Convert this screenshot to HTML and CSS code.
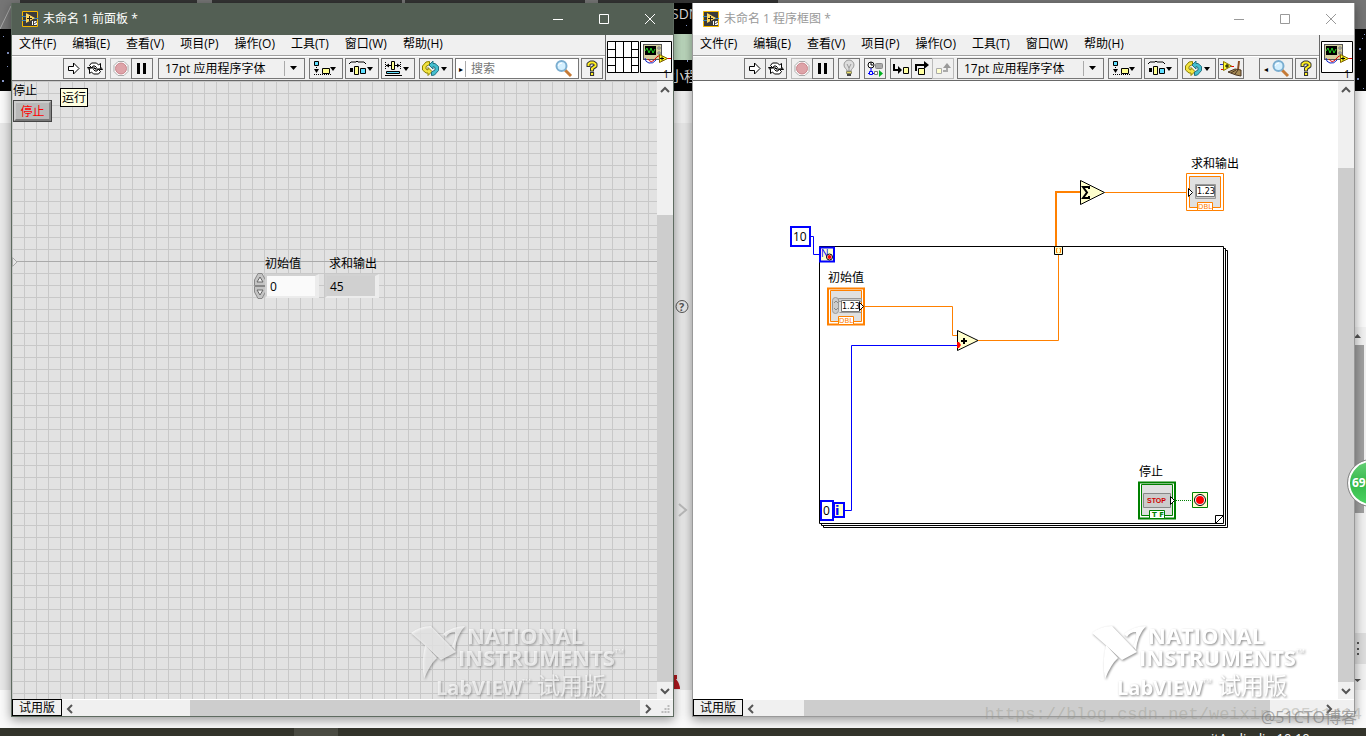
FILE: index.html
```html
<!DOCTYPE html>
<html lang="zh-CN">
<head>
<meta charset="utf-8">
<title>未命名 1 - LabVIEW</title>
<link rel="stylesheet" href="styles.css">
</head>
<body>
<svg class="defs" aria-hidden="true">
  <symbol id="app" viewBox="0 0 16 16"><path fill="#3b3b3b" stroke="#f5b800" d="M.5.5h15v15H.5z"/><path stroke="#3f86b8" d="M0 5.500h5M0 9.500h5M11 7.500h5"/><path fill="#ffd75e" d="M4 2l9 5-9 5z"/><path stroke="#222" d="M5 7.500h5M7.500 5v5"/><path stroke="#fff" fill="none" d="M10.500 10v4M14.500 10.500h-2v1.500h2v1.500h-2.500"/></symbol>
  <symbol id="run" viewBox="0 0 20 19"><path d="M4.500 7.500h5v-3.500l5.500 5.500-5.500 5.500v-3.500h-5z" fill="#fff" stroke="#000"/></symbol>
  <symbol id="loop" viewBox="0 0 20 19"><g fill="#fff" stroke="#000"><path d="M4.500 6.500l2-2.500h5l2 2 2-1.500v5.500h-5.500l1.500-1.500-1.500-1.500H8L7 9z"/><path d="M15.500 12.500l-2 2.500h-5l-2-2-2 1.500V9h5.500l-1.500 1.500 1.500 1.500h2l1-2z"/><path d="M2.500 8.500h3l-1.500 2zM14.500 10.500h3l-1.500-2z"/></g></symbol>
  <symbol id="abort" viewBox="0 0 20 19"><path d="M7 2.500h6l4 4v6l-4 4H7l-4-4v-6z" fill="#fff" stroke="#aaa"/><circle cx="10" cy="9.500" r="5.500" fill="#dea3a8" stroke="#c9868d"/></symbol>
  <symbol id="pause" viewBox="0 0 20 19"><path d="M5 4h3v11H5zM11 4h3v11h-3z"/></symbol>
  <symbol id="bulb" viewBox="0 0 20 19"><path d="M8 12c0-2-3-3-3-6a5 5 0 0 1 10 0c0 3-3 4-3 6z" fill="#ddd" stroke="#999"/><path d="M8 5l2 4 2-4M10 9v3" fill="none" stroke="#999"/><path fill="#eadb68" stroke="#886" d="M7.500 12.500h5v2h-5z"/><path d="M8 16h4" stroke="#444" stroke-width="2"/></symbol>
  <symbol id="retain" viewBox="0 0 20 19"><circle cx="6" cy="6" r="3" fill="#fff" stroke="#000"/><path d="M6 3v3h2" fill="none" stroke="#000"/><path d="M6 9v4M3 14.500h10" stroke="#00f" fill="none"/><path fill="#eee" stroke="#00f" d="M4.500 12.500h3v3h-3z"/><rect x="10.500" y="4.500" width="7" height="5" rx="1" fill="#aaa" stroke="#888"/><path d="M9.500 12.500h3v3h-3z" fill="#fff" stroke="#777"/><path fill="#00b020" d="M14 11l4 3.500-4 3.500z"/></symbol>
  <symbol id="into" viewBox="0 0 20 19"><path d="M3 5v6h6" fill="none" stroke="#000" stroke-width="2"/><path d="M7 7l4 4-4 4z"/><path fill="#ffffa0" stroke="#000" d="M12.500 8.500h5v6h-5z"/></symbol>
  <symbol id="over" viewBox="0 0 20 19"><path d="M4 12V6h9" fill="none" stroke="#000" stroke-width="2"/><path d="M12 2l5 4-5 4z"/><path fill="#ffffa0" stroke="#000" d="M6.500 9.500h6v6h-6z"/></symbol>
  <symbol id="out" viewBox="0 0 20 19"><path d="M10 12h4V8" fill="none" stroke="#aaa" stroke-width="2"/><path fill="#999" d="M10 9l4-5 4 5z"/><path fill="#ffffd0" stroke="#aaa" d="M3.500 9.500h5v5h-5z"/></symbol>
  <symbol id="align" viewBox="0 0 32 19"><path fill="#60dfff" stroke="#000" d="M4.500 2.500h4v4h-4z"/><path stroke="#000" stroke-dasharray="1 1" d="M6.500 8v4M4 15.500h17"/><path d="M4 10h5l-2.500 4zM20 8h6l-3 4z"/><path fill="#ffff90" stroke="#000" d="M12.500 9.500h7v5h-7z"/></symbol>
  <symbol id="dist" viewBox="0 0 32 19"><path fill="none" stroke="#000" d="M3 5l2-2h5l1-1 1 1h6l2 2"/><path fill="#ffff90" stroke="#000" d="M8.500 7.500h4v8h-4z"/><path fill="#60dfff" stroke="#000" d="M14.500 9.500h5v5h-5z"/><path d="M4 9h3v4H4zM21 8h6l-3 4z"/></symbol>
  <symbol id="resize" viewBox="0 0 32 19"><path stroke="#000" stroke-dasharray="1 1" d="M3.500 3v8M18.500 3v8"/><path d="M4 6.500h14" stroke="#000"/><path fill="#ffff90" stroke="#000" d="M9.500 2.500h3v8h-3z"/><path d="M4 6.500l3-2v4zM18 6.500l-3-2v4zM21 8h6l-3 4z"/><path fill="#60dfff" stroke="#000" d="M4.500 12.500h13v2h-13z"/><path stroke="#000" d="M3 16.500h17"/></symbol>
  <symbol id="order" viewBox="0 0 32 19"><path fill="#f3e440" stroke="#8a8000" d="M9.500 2.500L6 3 2.500 7v4L6 14h2v2.500l4-4-4-4v2.500l-2-1V7.500l3.500-2z"/><path fill="#45bfcf" stroke="#237080" d="M11.500 16.500l3-.500 4-4.500V7.500L15 4.500h-2V2L9 6l4 4V7.500l2 1V11l-3.500 2z"/><path d="M21 8h6l-3 4z"/></symbol>
  <symbol id="broom" viewBox="0 0 24 19"><path stroke="#23c" d="M1 5.500h4"/><path stroke="#e00" d="M11 7.500h4M2 10.500h4"/><path fill="#ffff35" stroke="#887000" d="M4.500 2.500l8 4.500-8 4.500z"/><path stroke="#000" d="M6 7h4M8 5v4"/><path stroke="#8b4b20" stroke-width="2" d="M20 2l-1 9"/><path fill="#a58a55" stroke="#4a3520" d="M9 13l7-3 6 1v6l-5-1z"/><path stroke="#4a3520" d="M12 14l5-3M16 15l3-4"/></symbol>
  <symbol id="lens" viewBox="0 0 20 19"><path stroke="#c57a36" stroke-width="3" d="M11 11l6 6"/><circle cx="7.500" cy="7" r="5" fill="#d4f0ff" stroke="#7baed0" stroke-width="2"/><path d="M4 7q1-3 4-3" fill="none" stroke="#fff"/></symbol>
  <symbol id="help" viewBox="0 0 20 19"><g fill="none" stroke-linecap="square" stroke-linejoin="round"><path stroke="#333" stroke-width="4" d="M6.500 6V5L8.500 3.500h3L13.500 5v2L10 9.500v1M10 15h.1"/><path stroke="#ffee20" stroke-width="2" d="M6.500 6V5L8.500 3.500h3L13.500 5v2L10 9.500v1M10 15h.1"/></g></symbol>
  <symbol id="conn" viewBox="0 0 32 32"><path fill="#fff" stroke="#000" d="M.5.5h31v31H.5zM8.500 0v32M16.500 0v32M24.500 0v32M0 16.500h32M0 8.500h8M0 24.500h8M24 8.500h8M24 24.500h8"/></symbol>
  <symbol id="vi" viewBox="0 0 32 32"><path fill="#fff" stroke="#000" d="M.5.5h31v31H.5z"/><rect x="3.500" y="3.500" width="18" height="15" fill="#d5cfa0" stroke="#555"/><path d="M5 5h11v9H5z"/><path stroke="#20d020" fill="none" d="M5 10l2-3 2 5 2-5 2 5 2-4"/><path fill="#fff" stroke="#777" d="M18 6h2v2h-2zM18 11h2v2h-2z"/><path fill="none" stroke="#1020c0" d="M5 17q0 4 4 5t7-3"/><path fill="none" stroke="#e00000" d="M8 18q3 5 7 0t5-2M25 17.500h6"/><path fill="#ffff20" stroke="#806000" d="M19.500 13.500l8 4-8 4z"/><path stroke="#000" d="M20 17.500h4M22 15.500v4"/></symbol>
  <symbol id="up" viewBox="0 0 16 16"><path fill="none" stroke="#555" stroke-width="2" d="M4 10l4-4 4 4"/></symbol>
  <symbol id="down" viewBox="0 0 16 16"><path fill="none" stroke="#555" stroke-width="2" d="M4 6l4 4 4-4"/></symbol>
  <symbol id="left" viewBox="0 0 16 16"><path fill="none" stroke="#555" stroke-width="2" d="M10 4L6 8l4 4"/></symbol>
  <symbol id="right" viewBox="0 0 16 16"><path fill="none" stroke="#555" stroke-width="2" d="M6 4l4 4-4 4"/></symbol>
  <symbol id="drop" viewBox="0 0 8 5"><path d="M0 0h7L3.500 4z"/></symbol>
  <symbol id="min" viewBox="0 0 10 10"><path stroke="currentColor" d="M0 5.500h10"/></symbol>
  <symbol id="max" viewBox="0 0 10 10"><path fill="none" stroke="currentColor" d="M.5.5h9v9h-9z"/></symbol>
  <symbol id="close" viewBox="0 0 10 10"><path stroke="currentColor" d="M0 0l10 10M10 0L0 10"/></symbol>
  <symbol id="eagle" viewBox="0 0 56 56"><path d="M0 7Q9 0 20 0l25 26-15 8Q15 20 0 7z"/><path d="M14 19l12 13Q19 38 13 53 10 36 14 19z"/><path d="M32 8Q42 0 54 0 45 10 44 24L41 20Q45 12 44 6 38 6 35 11z"/></symbol>
</svg>

<div class="desktop">
  <svg class="backdrop" viewBox="0 0 1366 736" preserveAspectRatio="none" aria-hidden="true">
    <path fill="#f2f2f2" d="M0 0h1366v736H0z"/>
    <path fill="#e8e8e8" d="M0 123h1366v567H0z"/>
    <path fill="#fafafa" d="M0 690h1366v38H0zM1355 91h11v243h-11zM0 91h11v32H0z"/>
    <path fill="#757575" d="M0 0h1366v29H0z"/>
    <path fill="#333" d="M20 0h177v3H20zM212 0h190v3H212zM405 0h180v3H405zM598 0h180v3H598z"/>
    <path d="M0 29h11v62H0zM674 3h18v88h-18zM1355 29h11v62h-11z"/>
    <path fill="#bbd6bc" d="M674 34h18v26h-18z"/>
    <path stroke="#aaa" d="M0 29l11-23"/>
    <path fill="#8899cc" d="M3 36h1v1H3zM7 52h2v2H7zM2 80h2v2H2zM7 66h1v1H7zM686 25h1v1h-1zM687 60h1v2h-1zM1359 48h2v2h-2zM1364 34h1v1h-1zM1360 60h1v1h-1zM1357 78h2v2h-2zM1362 38h1v1h-1zM1363 88h1v1h-1z"/>
    <text x="671" y="19" class="back-text">SDN</text>
    <text x="670" y="81" class="back-text">小程</text>
    <circle cx="682" cy="306.500" r="6" fill="none" stroke="#555"/><text x="679" y="311" class="back-help">?</text>
    <path fill="none" stroke="#bbb" stroke-width="2" d="M679 504l7 6-7 6"/>
    <path fill="#b0181e" d="M674 675h3v4h-1q4 5 4 10h-6z"/>
    <path fill="#f1f1f1" d="M1355 327h11v363h-11z"/>
    <path fill="#a0a0a0" d="M1355 345h9v168h-9z"/>
    <path fill="#ddd" d="M1355 633h11v31h-11z"/>
    <path fill="#555" d="M1357 642h2v2h-2zM1357 648h2v2h-2zM1357 653h2v2h-2zM1354 679h7l-3.500 3zM1354 338h7l-3.500-4z"/>
    <path fill="#33342b" d="M0 728h1366v8H0z"/><path fill="#4a4b42" d="M294 728h44v8h-44z"/>
    <text x="1211" y="743" class="clock">itAudiodio 10:10</text>
  </svg>

  <main class="windows">
    <section class="window active" aria-label="前面板">
      <header class="titlebar">
        <svg class="app"><use href="#app"/></svg><h1 class="title">未命名 1 前面板 *</h1>
        <button class="sys" aria-label="最小化"><svg><use href="#min"/></svg></button>
        <button class="sys" aria-label="最大化"><svg><use href="#max"/></svg></button>
        <button class="sys" aria-label="关闭"><svg><use href="#close"/></svg></button>
      </header>
      <div class="head">
        <div class="bars">
          <nav class="menu"><button>文件(F)</button><button>编辑(E)</button><button>查看(V)</button><button>项目(P)</button><button>操作(O)</button><button>工具(T)</button><button>窗口(W)</button><button>帮助(H)</button></nav>
          <div class="toolbar">
            <div class="group"><button class="tool" aria-label="运行"><svg><use href="#run"/></svg></button><button class="tool" aria-label="连续运行"><svg><use href="#loop"/></svg></button></div>
            <div class="group"><button class="tool off" aria-label="中止"><svg><use href="#abort"/></svg></button><button class="tool" aria-label="暂停"><svg><use href="#pause"/></svg></button></div>
            <div class="font"><select aria-label="字体"><option>17pt 应用程序字体</option></select><svg class="arrow"><use href="#drop"/></svg></div>
            <div class="pair"><button class="tool wide" aria-label="对齐对象"><svg><use href="#align"/></svg></button><button class="tool wide" aria-label="分布对象"><svg><use href="#dist"/></svg></button><button class="tool wide" aria-label="调整大小"><svg><use href="#resize"/></svg></button></div>
            <button class="tool wide" aria-label="重新排序"><svg><use href="#order"/></svg></button>
            <div class="pair search-pair"><div class="search"><span class="tick">▸</span><input type="text" placeholder="搜索" aria-label="搜索"><svg class="lens"><use href="#lens"/></svg></div><button class="tool" aria-label="帮助"><svg><use href="#help"/></svg></button></div>
          </div>
        </div>
        <div class="icons"><svg><use href="#conn"/></svg><div class="vi"><svg><use href="#vi"/></svg><span class="vi-num">1</span></div></div>
      </div>
      <div class="work">
        <div class="canvas grid">
          <svg class="origin" viewBox="0 0 6 10"><path fill="#e6e6e6" stroke="#aaa" d="M.5.5L5 5 .5 9.500z"/></svg>
          <label class="tag stop-tag" for="stop">停止</label>
          <button id="stop" class="stop">停止</button>
          <span class="tip" role="tooltip">运行</span>
          <label class="tag init-tag" for="init">初始值</label>
          <svg class="spin" viewBox="0 0 14 28"><path fill="#c4c4c4" stroke="#888" d="M1.500 13.500V8L5 1.500h4L12.500 8v5.500zM1.500 14.500V20L5 26.500h4l3.500-6.500v-5.500z"/><path fill="#eee" stroke="#666" d="M7 5l3 5H4zM7 23l3-5H4z"/></svg>
          <input id="init" class="num" type="text" value="0">
          <label class="tag sum-tag" for="sum">求和输出</label>
          <output id="sum" class="num result">45</output>
          <svg class="ni" viewBox="0 0 216 76" role="img" aria-label="NATIONAL INSTRUMENTS LabVIEW 试用版">
            <use href="#eagle" width="56" height="56"/>
            <text x="56" y="18" class="ni-big">NATIONAL</text><text x="47" y="40" class="ni-big">INSTRUMENTS</text>
            <text x="204" y="27" class="ni-tm">TM</text><text x="25" y="69" class="ni-lab">LabVIEW</text>
            <text x="111" y="57" class="ni-tm">TM</text><text x="126" y="68" class="ni-cjk">试用版</text>
          </svg>
        </div>
        <div class="vbar"><button aria-label="向上"><svg><use href="#up"/></svg></button><div class="track"><div class="thumb v1"></div></div><button aria-label="向下"><svg><use href="#down"/></svg></button></div>
      </div>
      <footer class="foot">
        <span class="trial">试用版</span>
        <button aria-label="向左"><svg><use href="#left"/></svg></button><div class="track"><div class="thumb h1"></div></div><button aria-label="向右"><svg><use href="#right"/></svg></button>
        <svg class="grip" viewBox="0 0 16 16"><path fill="#bbb" d="M11 5h2v2h-2zM8 8h2v2H8zM11 8h2v2h-2zM5 11h2v2H5zM8 11h2v2H8zM11 11h2v2h-2z"/></svg>
      </footer>
    </section>

    <section class="window" aria-label="程序框图">
      <header class="titlebar">
        <svg class="app"><use href="#app"/></svg><h1 class="title">未命名 1 程序框图 *</h1>
        <button class="sys" aria-label="最小化"><svg><use href="#min"/></svg></button>
        <button class="sys" aria-label="最大化"><svg><use href="#max"/></svg></button>
        <button class="sys" aria-label="关闭"><svg><use href="#close"/></svg></button>
      </header>
      <div class="head">
        <div class="bars">
          <nav class="menu"><button>文件(F)</button><button>编辑(E)</button><button>查看(V)</button><button>项目(P)</button><button>操作(O)</button><button>工具(T)</button><button>窗口(W)</button><button>帮助(H)</button></nav>
          <div class="toolbar">
            <div class="group"><button class="tool" aria-label="运行"><svg><use href="#run"/></svg></button><button class="tool" aria-label="连续运行"><svg><use href="#loop"/></svg></button></div>
            <div class="group"><button class="tool off" aria-label="中止"><svg><use href="#abort"/></svg></button><button class="tool" aria-label="暂停"><svg><use href="#pause"/></svg></button></div>
            <button class="tool" aria-label="高亮显示"><svg><use href="#bulb"/></svg></button>
            <button class="tool" aria-label="保存连线值"><svg><use href="#retain"/></svg></button>
            <div class="group"><button class="tool" aria-label="单步步入"><svg><use href="#into"/></svg></button><button class="tool" aria-label="单步步过"><svg><use href="#over"/></svg></button><button class="tool off" aria-label="单步步出"><svg><use href="#out"/></svg></button></div>
            <div class="font near"><select aria-label="字体"><option>17pt 应用程序字体</option></select><svg class="arrow"><use href="#drop"/></svg></div>
            <div class="pair"><button class="tool wide" aria-label="对齐对象"><svg><use href="#align"/></svg></button><button class="tool wide" aria-label="分布对象"><svg><use href="#dist"/></svg></button></div>
            <div class="pair"><button class="tool wide" aria-label="重新排序"><svg><use href="#order"/></svg></button><button class="tool broom" aria-label="整理程序框图"><svg><use href="#broom"/></svg></button></div>
            <div class="pair end"><button class="tool find" aria-label="搜索"><span class="tick">◂</span><svg class="lens"><use href="#lens"/></svg></button><button class="tool" aria-label="帮助"><svg><use href="#help"/></svg></button></div>
          </div>
        </div>
        <div class="icons"><div class="vi"><svg><use href="#vi"/></svg><span class="vi-num">1</span></div></div>
      </div>
      <div class="work">
        <div class="canvas">
          <svg class="diagram" viewBox="693 81 645 618" role="img" aria-label="程序框图">
            <g fill="none" stroke="#000"><path d="M819.500 246.500h404v277h-404zM1223.500 248.500h2v277h-404v-2M1225.500 250.500h2v277h-404v-2M1215.500 523.500v-8h8l-8 8"/></g>
            <g fill="none" stroke="#00f"><path d="M811 236.500h2.500v18h6M957 345.500H851.500v165H845"/></g>
            <g fill="none" stroke="#ff8000"><path d="M865 306.500h87.500v29h5M978 340.500h80.500V255M1105 192.500h82"/><path stroke-width="2" d="M1056 247v-55h25"/></g>
            <path stroke="#008000" stroke-dasharray="1 1" d="M1176 500.500h16"/>
            <g stroke="#00f" stroke-width="2" fill="#fff"><path d="M791 227h19v19h-19zM821 501h12v19h-12z"/><path fill="#ffffcc" d="M820 247.500h14v14h-14zM834 503h10v14h-10z"/></g>
            <text x="793" y="241" class="n12">10</text><text x="823" y="515" class="n12">0</text><text x="835" y="515" class="blue">i</text><text x="821" y="257" class="blue-n">N</text>
            <circle cx="829.500" cy="257" r="3" fill="#fff" stroke="#000"/><circle cx="829.500" cy="257" r="2" fill="#f00"/>
            <g fill="#ffffcc" stroke="#000"><path d="M957.500 330.500l20.500 10-20.500 10zM1080.500 180.500l24 12-24 12zM1054.500 246.500h8v8h-8z"/></g>
            <path stroke="#000" stroke-width="2" d="M961 341h6M964 338v6"/><path fill="#f00" d="M957 342h2l2 3-2 3h-2z"/>
            <path fill="none" stroke="#000" stroke-width="2" d="M1089 189v-2h-6l4 5.500-4 5.500h6v-2"/>
            <path fill="none" stroke="#ff8000" d="M1057.500 248.500h-1v4h1M1059.500 248.500h1v4h-1"/>
            <text x="828" y="282" class="lbl">初始值</text><text x="1191" y="168" class="lbl">求和输出</text><text x="1139" y="476" class="lbl">停止</text>
            <g stroke="#ff8000"><path fill="#fff" stroke-width="2" d="M828 288.500h36v36h-36z"/><path fill="#e0e0e0" d="M830.500 290.500h31v31h-31z"/><path fill="#fff" d="M838.500 316.500h15v8h-15zM1186.500 173.500h37v37h-37z"/><path fill="#e0e0e0" d="M1189.500 176.500h31v31h-31z"/><path fill="#fff" d="M1197.500 202.500h15v8h-15z"/></g>
            <g stroke="#999" fill="#ccc"><rect x="832.500" y="297.500" width="6" height="16" rx="3"/><path d="M838.500 298.500h23v3h-23zM839.500 312.500h22M1195.500 184.500h20v14h-20z"/></g>
            <path fill="none" stroke="#888" d="M834 303l2-2 2 2M834 308l2 2 2-2"/>
            <path fill="#fff" stroke="#777" d="M841.500 300.500h18v11h-18zM1196.500 185.500h18v11h-18z"/>
            <path fill="#fff" stroke="#000" d="M859.500 302.500l4 4-4 4zM1188.500 188.500l4 4-4 4z"/>
            <text x="842" y="309" class="tiny">1.23</text><text x="1197" y="194" class="tiny">1.23</text><text x="839" y="323" class="dbl">DBL</text><text x="1198" y="209" class="dbl">DBL</text>
            <g stroke="#008000"><path fill="#fff" stroke-width="2" d="M1139 482.500h36v36h-36z"/><path fill="#e0e0e0" d="M1141.500 484.500h31v31h-31z"/><path fill="#fff" d="M1149.500 510.500h15v8h-15z"/><path fill="#ffffcc" d="M1192.500 492.500h15v15h-15z"/></g>
            <path fill="#ccc" stroke="#888" d="M1143.500 493.500h27v14h-27z"/>
            <path fill="#fff" stroke="#000" d="M1170.500 496.500l4 4-4 4z"/>
            <text x="1147" y="503" class="stop-text">STOP</text><text x="1152" y="517" class="tf">T F</text>
            <circle cx="1200" cy="500" r="5.500" fill="#fff" stroke="#000"/><circle cx="1200" cy="500" r="4" fill="#f00"/>
          </svg>
          <svg class="ni" viewBox="0 0 216 76" role="img" aria-label="NATIONAL INSTRUMENTS LabVIEW 试用版">
            <use href="#eagle" width="56" height="56"/>
            <text x="56" y="18" class="ni-big">NATIONAL</text><text x="47" y="40" class="ni-big">INSTRUMENTS</text>
            <text x="204" y="27" class="ni-tm">TM</text><text x="25" y="69" class="ni-lab">LabVIEW</text>
            <text x="111" y="57" class="ni-tm">TM</text><text x="126" y="68" class="ni-cjk">试用版</text>
          </svg>
        </div>
        <div class="vbar"><button aria-label="向上"><svg><use href="#up"/></svg></button><div class="track"><div class="thumb v2"></div></div><button aria-label="向下"><svg><use href="#down"/></svg></button></div>
      </div>
      <footer class="foot">
        <span class="trial">试用版</span>
        <button aria-label="向左"><svg><use href="#left"/></svg></button><div class="track"><div class="thumb h2"></div></div><button aria-label="向右"><svg><use href="#right"/></svg></button>
        <svg class="grip"></svg>
      </footer>
    </section>
  </main>
  <span class="ball">69</span>
  <span class="url">https://blog.csdn.net/weixin_39511414</span>
  <span class="credit">@51CTO博客</span>
</div>
</body>
</html>
```

FILE: styles.css
```css
* { box-sizing: border-box; }
body { margin: 0; font: 12px/16px "Open Sans", "Noto Sans CJK SC", sans-serif; color: #000; }
button, input, select { font: inherit; color: inherit; margin: 0; padding: 0; border: 0; background: none; border-radius: 0; }
svg { display: block; flex: none; }
.defs { position: absolute; width: 0; height: 0; }

.desktop { position: relative; height: 100vh; overflow: hidden; }
.backdrop { position: absolute; inset: 0; width: 100%; height: 100%; }
.back-text { font-size: 14px; fill: #ddd; }
.back-help { font-size: 11px; font-weight: 700; fill: #555; }
.clock { font-size: 13px; fill: #fff; }

.windows { position: relative; display: grid; grid-template-columns: 1fr 1fr; gap: 18px; height: 100%; padding: 3px 11px 19px; }
.window { display: flex; flex-direction: column; min-width: 0; border: 1px solid #999; border-top: 0; background: #f0f0f0; box-shadow: 0 3px 10px rgba(0, 0, 0, .4); }
.window.active { border-color: #5e6b60; }

.titlebar { display: flex; align-items: center; height: 32px; padding-left: 10px; background: #fff; color: #999; }
.active .titlebar { background: #535f54; color: #fff; }
.app { width: 16px; height: 16px; }
.title { flex: 1; margin: 0 0 0 5px; font-size: 12px; font-weight: 400; line-height: 16px; }
.sys { display: flex; align-items: center; justify-content: center; width: 46px; height: 30px; }
.sys svg { width: 10px; height: 10px; }

.head { display: flex; height: 46px; border-bottom: 1px solid #696969; }
.bars { flex: 1; min-width: 0; border-right: 1px solid #696969; }
.menu { display: flex; gap: 16px; height: 21px; padding-left: 7px; border-bottom: 1px solid #a0a0a0; }
.menu button { height: 18px; white-space: nowrap; }
.toolbar { display: flex; gap: 4px; padding: 1px 0 1px 51px; border-top: 1px solid #fff; }
.group, .pair { display: flex; flex: none; }
.pair { gap: 2px; }
.group .tool + .tool { margin-left: -1px; }
.tool { display: flex; flex: none; align-items: center; justify-content: center; width: 22px; height: 21px; border: 1px solid #777; background: #f0f0f0; }
.tool.off { border-color: #bbb; }
.tool svg { width: 20px; height: 19px; }
.tool.wide { width: 34px; }
.tool.wide svg { width: 32px; }
.tool.broom { width: 26px; }
.tool.broom svg { width: 24px; }
.tool.find { width: 34px; }
.font { display: flex; flex: none; align-items: center; width: 147px; height: 21px; margin-left: 1px; padding-right: 6px; border: 1px solid #777; }
.font.near { margin-left: -1px; }
.font select { flex: 1; min-width: 0; height: 15px; padding-left: 6px; appearance: none; border-right: 1px solid #aaa; line-height: 15px; }
.arrow { width: 8px; height: 5px; margin-left: 5px; }
.pair.search-pair { flex: 1; min-width: 0; margin: 0 2px 0 -2px; }
.search { display: flex; align-items: center; flex: 1; min-width: 0; height: 21px; padding-right: 4px; border: 1px solid #777; background: #fff; }
.tick { flex: none; width: 10px; font-size: 8px; text-align: center; }
.search .tick { border-right: 1px solid #aaa; }
.search input { flex: 1; min-width: 0; padding-left: 5px; outline: 0; }
.search input::placeholder { color: #777; opacity: 1; }
.lens { width: 20px; height: 19px; }
.pair.end { margin-left: auto; margin-right: 2px; }
.icons { display: flex; flex: none; gap: 1px; padding: 6px 1px 0; }
.icons svg { width: 32px; height: 32px; }
.vi { position: relative; }
.vi-num { position: absolute; right: 3px; bottom: 0; font-size: 10px; line-height: 12px; }

.work { display: flex; flex: 1; min-height: 0; }
.canvas { position: relative; flex: 1; min-width: 0; overflow: hidden; background: #fff; }
.grid { background: linear-gradient(#aaa, #aaa) 0 180px / 100% 1px no-repeat, linear-gradient(#c8c8c8 1px, transparent 1px) 0 0 / 12px 12px, linear-gradient(90deg, #c8c8c8 1px, #e2e2e2 1px) 0 0 / 12px 12px; }
.diagram { width: 645px; height: 618px; }
.origin { position: absolute; left: 0; top: 176px; width: 6px; height: 10px; }
.tag { position: absolute; white-space: nowrap; }
.stop-tag { left: 1px; top: 2px; }
.init-tag { left: 253px; top: 175px; }
.sum-tag { left: 317px; top: 175px; }
.stop { position: absolute; left: 1px; top: 19px; width: 39px; height: 22px; padding-top: 1px; border: 3px solid; border-color: #ccc #888 #777 #ccc; outline: 1px solid #444; outline-offset: -1px; background: #b9b9b9; color: #f00; line-height: 15px; }
.tip { position: absolute; left: 48px; top: 7px; padding: 0 1px; border: 1px solid #000; background: #ffffe1; line-height: 17px; }
.spin { position: absolute; left: 241px; top: 191px; width: 14px; height: 28px; }
.num { position: absolute; left: 253px; top: 193px; width: 54px; height: 24px; padding-left: 3px; border: 2px solid; border-color: #d2d2d2 #ececec #ececec #d2d2d2; border-right-width: 4px; background: #fafafa; font-size: 12px; line-height: 22px; }
.result { left: 313px; background: #d0d0d0; }
.ni { position: absolute; right: 30px; bottom: -3px; width: 216px; height: 76px; fill: #fff; fill-opacity: .7; filter: drop-shadow(1px 1px 1px rgba(0, 0, 0, .45)); }
.window:not(.active) .ni { fill-opacity: 1; }
.ni-big { font: 700 22px "Open Sans", sans-serif; }
.ni-lab { font: 700 20px "Open Sans", sans-serif; }
.ni-cjk { font: 23px "Noto Sans CJK SC", sans-serif; }
.ni-tm { font: 6px "Open Sans", sans-serif; }

.vbar { display: flex; flex-direction: column; width: 16px; background: #f0f0f0; }
.vbar button, .foot button { width: 16px; height: 17px; }
.vbar svg, .foot button svg { width: 16px; height: 16px; }
.track { display: flex; flex: 1; min-width: 0; min-height: 0; }
.vbar .track { flex-direction: column; }
.thumb { background: #cdcdcd; }
.v1 { width: 16px; height: 80%; margin-top: auto; }
.v2 { width: 16px; height: 88%; margin-top: auto; }
.h1 { width: 80%; margin-left: auto; }
.h2 { width: 83%; margin-right: auto; margin-left: 8%; }
.foot { display: flex; height: 17px; border-top: 1px solid #fff; }
.trial { width: 50px; margin-top: -1px; border: 1px solid #000; line-height: 15px; text-align: center; }
.grip { width: 17px; height: 16px; }

.lbl, .n12 { font-size: 12px; }
.blue { font: 700 13px "DejaVu Sans", sans-serif; fill: #00f; }
.blue-n { font-size: 10px; fill: #00f; }
.tiny { font: 8px "DejaVu Sans", sans-serif; }
.dbl { font: 7px "DejaVu Sans", sans-serif; fill: #ff8000; }
.stop-text { font: 700 7px "Liberation Sans", sans-serif; fill: #d00000; }
.tf { font: 700 7px "DejaVu Sans", sans-serif; fill: #008000; }

.ball { position: absolute; right: -28px; top: 460px; width: 46px; height: 46px; padding-left: 2px; border: 2px solid #fff; outline: 1px solid #888; border-radius: 50%; background: linear-gradient(#65cf75, #35b84a 50%, #4bd462); color: #fff; font-weight: 700; line-height: 42px; }
.url { position: absolute; right: 4px; bottom: 11px; font: 17px/20px "Liberation Mono", monospace; color: rgba(150, 150, 140, .4); white-space: nowrap; }
.credit { position: absolute; right: 9px; bottom: 9px; font-size: 16px; line-height: 20px; color: rgba(120, 120, 120, .65); }
```
